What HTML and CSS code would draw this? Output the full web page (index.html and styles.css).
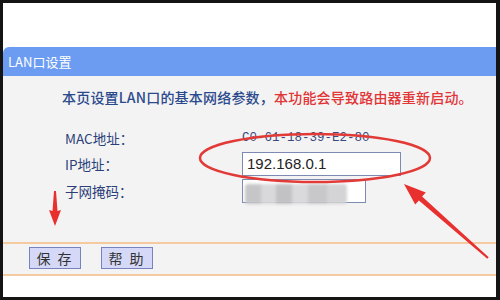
FILE: index.html
```html
<!DOCTYPE html>
<html lang="zh-CN">
<head>
  <meta charset="UTF-8">
  <title>LAN口设置</title>
  <link rel="stylesheet" href="styles.css">
</head>
<body>
  <div class="frame">
    <div class="top"></div>
    <div class="title">LAN口设置</div>
    <div class="content">
      <p class="intro">本页设置LAN口的基本网络参数，<span class="warn">本功能会导致路由器重新启动。</span></p>
      <div class="form">
        <span class="label">MAC地址：</span>
        <span class="mac">C0-61-18-39-E2-80</span>
        <span class="label">IP地址：</span>
        <div class="input ip">192.168.0.1</div>
        <span class="label">子网掩码：</span>
        <div class="input mask"><div class="blur"></div></div>
      </div>
      <div class="buttons">
        <button class="btn">保 存</button>
        <button class="btn">帮 助</button>
      </div>
    </div>
    <div class="bottom"></div>

    <!-- red annotations drawn over the screenshot -->
    <svg class="marks" width="500" height="300" viewBox="0 0 500 300">
      <ellipse cx="315" cy="158" rx="115" ry="24" fill="none" stroke="#e23a36" stroke-width="2.5"/>
      <polygon fill="#e8302e" points="404,184 425.8,192.5 422.1,196.6 488.7,257.3 487.3,258.7 418.9,200.4 415.2,204.5"/>
      <polygon fill="#e8302e" points="54,191 56,191 57.5,211 61,210 55,226 49,210 52.5,211"/>
    </svg>
  </div>
</body>
</html>
```

FILE: styles.css
```css
body {
  margin: 0;
  font-family: "Noto Sans CJK SC", "Liberation Sans", sans-serif;
}
.frame {
  position: relative;
  width: 500px;
  height: 300px;
  box-sizing: border-box;
  border: 3px solid #141414;
  border-right-width: 4px;
  display: flex;
  flex-direction: column;
  background: #fff;
}
.top {
  height: 44px;
  background: #fff;
}
.title {
  height: 29px;
  line-height: 29px;
  background: #6b9cf2;
  border-top-left-radius: 6px;
  color: #fff;
  font-size: 13px;
  padding-left: 5px;
}
.content {
  background: #f3f3f4;
  padding-top: 11px;
}
.intro {
  margin: 0 0 0 59px;
  font-size: 14px;
  letter-spacing: 0.2px;
  line-height: 20px;
  color: #2b4a8c;
  font-weight: 500;
}
.warn {
  color: #e23434;
}
.form {
  display: grid;
  grid-template-columns: 177px auto;
  grid-template-rows: 22px 24px 24px;
  row-gap: 3px;
  margin: 20px 0 0 62px;
  align-items: center;
  justify-items: start;
}
.label {
  font-size: 13.5px;
  color: #2b3f78;
}
.mac {
  font-family: "Liberation Mono", monospace;
  font-size: 12.5px;
  color: #3a4a7c;
}
.input {
  box-sizing: border-box;
  height: 24px;
  border: 1px solid #7d8bb2;
  background: #fff;
  font-family: "Liberation Sans", sans-serif;
  font-size: 15px;
  line-height: 22px;
  padding-left: 4px;
  color: #222;
}
.ip {
  width: 159px;
}
.mask {
  position: relative;
  width: 124px;
  overflow: visible;
}
.blur {
  position: absolute;
  left: 2px;
  top: 4px;
  width: 102px;
  height: 20px;
  border-radius: 3px;
  background: linear-gradient(90deg, #c6c6c8 0 16%, #d9d9db 16% 30%, #c2c2c4 30% 46%, #dadadc 46% 62%, #c8c8ca 62% 80%, #d4d4d6 80% 100%);
  filter: blur(1.5px);
}
.buttons {
  margin-top: 39px;
  border-top: 2px solid #f6caa0;
  border-bottom: 2px solid #f6caa0;
  padding: 3px 0 5px 26px;
  display: flex;
  gap: 20px;
}
.btn {
  width: 52px;
  height: 22px;
  padding: 0;
  border: 1px solid #7683c0;
  background: #d5d9f7;
  font-family: "Noto Sans CJK SC", sans-serif;
  font-size: 14px;
  line-height: 20px;
  color: #333;
  letter-spacing: 2px;
}
.bottom {
  flex: 1;
  background: #fff;
}
.marks {
  position: absolute;
  left: -3px;
  top: -3px;
}
```
